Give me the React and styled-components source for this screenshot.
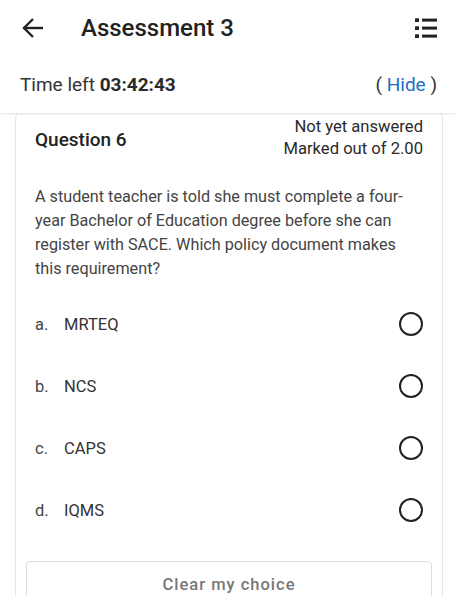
import React from "react";
import styled, { createGlobalStyle } from "styled-components";

const GlobalStyle = createGlobalStyle`
  html, body {
    margin: 0;
    padding: 0;
    background: #ffffff;
  }
  body {
    font-family: Roboto, "Noto Sans", "Liberation Sans", sans-serif;
    -webkit-font-smoothing: antialiased;
  }
`;

const options = [
  { letter: "a.", label: "MRTEQ" },
  { letter: "b.", label: "NCS" },
  { letter: "c.", label: "CAPS" },
  { letter: "d.", label: "IQMS" },
];

function BackIcon() {
  return (
    <svg width="24" height="24" viewBox="0 0 24 24" fill="none">
      <path d="M2.5 12H22" stroke="#222" strokeWidth="2.4" />
      <path d="M12 3L3 12l9 9" stroke="#222" strokeWidth="2.4" strokeLinejoin="miter" />
    </svg>
  );
}

function ListIcon() {
  return (
    <svg width="24" height="24" viewBox="0 0 24 24" fill="#222">
      <rect x="1" y="2.2" width="4" height="3.8" rx="0.6" />
      <rect x="1" y="10.2" width="4" height="3.8" rx="0.6" />
      <rect x="1" y="18.2" width="4" height="3.8" rx="0.6" />
      <rect x="8" y="2.6" width="15" height="3" />
      <rect x="8" y="10.6" width="15" height="3" />
      <rect x="8" y="18.6" width="15" height="3" />
    </svg>
  );
}

function App() {
  return (
    <Page>
      <GlobalStyle />
      <Header>
        <AppBar>
          <IconButton aria-label="Back">
            <BackIcon />
          </IconButton>
          <Title>Assessment 3</Title>
          <IconButton aria-label="Navigation">
            <ListIcon />
          </IconButton>
        </AppBar>
        <TimerRow>
          <TimeLeft>
            Time left <strong>03:42:43</strong>
          </TimeLeft>
          <HideToggle>
            ( <HideLink>Hide</HideLink> )
          </HideToggle>
        </TimerRow>
      </Header>

      <Content>
        <Card>
          <QuestionHead>
            <QuestionNo>Question 6</QuestionNo>
            <Status>
              <div>Not yet answered</div>
              <div>Marked out of 2.00</div>
            </Status>
          </QuestionHead>

          <QuestionText>
            A student teacher is told she must complete a four-year Bachelor of
            Education degree before she can register with SACE. Which policy
            document makes this requirement?
          </QuestionText>

          <OptionList>
            {options.map((o) => (
              <OptionRow key={o.letter}>
                <Letter>{o.letter}</Letter>
                <OptionLabel>{o.label}</OptionLabel>
                <Radio />
              </OptionRow>
            ))}
          </OptionList>

          <ClearButton>Clear my choice</ClearButton>
        </Card>
      </Content>
    </Page>
  );
}

const Page = styled.div`
  width: 456px;
  height: 596px;
  overflow: hidden;
  background: #ffffff;
`;

const Header = styled.header`
  position: relative;
  z-index: 2;
  background: #ffffff;
  box-shadow: 0 1px 2px rgba(0, 0, 0, 0.12);
`;

const AppBar = styled.div`
  height: 56px;
  display: flex;
  align-items: center;
  padding: 0 18px 0 21px;
`;

const IconButton = styled.div`
  width: 24px;
  height: 24px;
  display: flex;
  align-items: center;
  justify-content: center;
`;

const Title = styled.h1`
  flex: 1;
  margin: 0 0 0 36px;
  font-size: 24px;
  font-weight: 500;
  color: #222222;
`;

const TimerRow = styled.div`
  height: 57px;
  display: flex;
  align-items: center;
  justify-content: space-between;
  padding: 0 19px 0 20px;
  font-size: 19px;
  color: #333333;
`;

const TimeLeft = styled.div`
  strong {
    font-weight: 700;
    color: #2a2a2a;
  }
`;

const HideToggle = styled.div`
  color: #333333;
`;

const HideLink = styled.span`
  color: #1a6fc4;
`;

const Content = styled.main`
  padding: 0 13px 0 15px;
`;

const Card = styled.section`
  margin-top: -6px;
  border: 1px solid #e6e6e6;
  border-radius: 12px;
  padding: 8px 10px 0;
  background: #ffffff;
`;

const QuestionHead = styled.div`
  display: flex;
  align-items: center;
  justify-content: space-between;
  padding: 0 9px 0 9px;
`;

const QuestionNo = styled.div`
  font-size: 19px;
  font-weight: 500;
  color: #222222;
  margin-top: 3px;
`;

const Status = styled.div`
  text-align: right;
  font-size: 16.6px;
  line-height: 22px;
  color: #2a2a2a;
`;

const QuestionText = styled.p`
  margin: 25px 0 0;
  padding: 0 15px 0 9px;
  font-size: 16.2px;
  line-height: 24px;
  color: #444444;
`;

const OptionList = styled.div`
  margin-top: 12px;
  display: flex;
  flex-direction: column;
`;

const OptionRow = styled.div`
  height: 62px;
  display: flex;
  align-items: center;
  padding: 0 9px 0 9px;
  font-size: 16.5px;
  color: #333333;
`;

const Letter = styled.span`
  width: 29px;
  color: #444444;
`;

const OptionLabel = styled.span`
  flex: 1;
`;

const Radio = styled.span`
  width: 20px;
  height: 20px;
  border: 2px solid #222222;
  border-radius: 50%;
`;

const ClearButton = styled.button`
  display: block;
  width: 100%;
  margin-top: 20px;
  height: 50px;
  padding: 0 0 4px;
  border: 1px solid #dcdcdc;
  border-radius: 4px;
  background: #ffffff;
  font-family: Roboto, "Noto Sans", "Liberation Sans", sans-serif;
  font-size: 16.5px;
  font-weight: 500;
  letter-spacing: 1px;
  color: #777777;
`;

export default App;
